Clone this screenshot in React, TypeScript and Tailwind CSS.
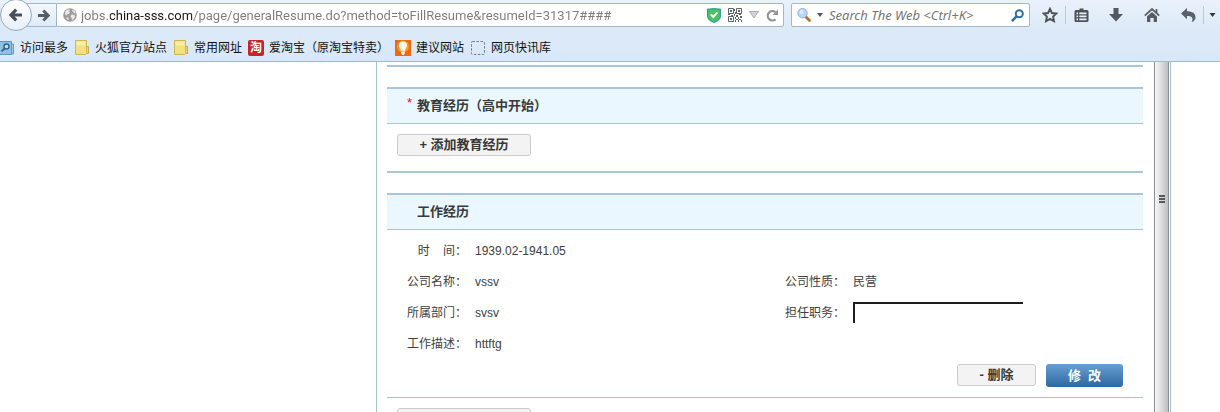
import React from "react";

const URL_TEXT = "jobs.china-sss.com/page/generalResume.do?method=toFillResume&resumeId=31317####";

function ArrowIcon({ className = "" }: { className?: string }) {
  return (
    <svg viewBox="0 0 14 14" className={className} aria-hidden="true">
      <path d="M7.2 1.6 1.9 7l5.3 5.4M2.4 7H13" fill="none" stroke="currentColor" strokeWidth="3.2" />
    </svg>
  );
}

function GlobeIcon() {
  return (
    <svg viewBox="0 0 14 14" className="size-[14px] shrink-0" aria-hidden="true">
      <circle cx="7" cy="7" r="6.8" fill="#9b9b9b" />
      <path d="M2.2 3.2 5 1.2l2 .6L6 3.4l1.2 1L5.6 6 4 6.4l-.4 1.4L2 6.2zM8.6 1.2l3 1.6 1.4 2.6-2-.4-1.4-1.6zM8.4 6.4l3 .4 1 1.4-1.4 2.6-2 1.6-.6-2.8-1.2-1.2zM3.4 9l2 .8.4 2.4L3.6 11z" fill="#e6e6e6" />
    </svg>
  );
}

function ShieldIcon() {
  return (
    <svg viewBox="0 0 14 15" className="h-[15px] w-[14px]" aria-hidden="true">
      <path d="M0 .8 7 0l7 .8V8c0 3.6-4 6-7 7-3-1-7-3.400-7-7z" fill="#2fa48c" />
      <path d="M1.200 2 7 1.300l5.800.7V8c0 2.800-3 4.800-5.800 5.700C4.200 12.800 1.200 10.800 1.200 8z" fill="#4cc163" />
      <path d="m3.800 6.400 2.400 2.600 4.200-4.600" fill="none" stroke="#fff" strokeWidth="1.900" />
    </svg>
  );
}

function QrIcon() {
  return (
    <svg viewBox="0 0 14 14" className="size-[14px]" aria-hidden="true">
      <g fill="none" stroke="#5b6268">
        <path d="M.5.5h5v5h-5zM8.500.5h5v5h-5zM.5 8.500h5v5h-5z" />
      </g>
      <path d="M2 2h2v2H2zM10 2h2v2h-2zM2 10h2v2H2zM6 1h1v2H6zM7 4h1v2H7zM0 6h2v1H0zM3 7h2v1H3zM6 6h1v2H6zM8 7h2v2H8zM11 6h2v1h-2zM12 8h2v2h-2zM7 9h1v2H7zM10 9h1v2h-1zM8 11h2v1H8zM7 12h1v2H7zM11 11h2v1h-2zM10 12h1v2h-1zM13 12h1v2h-1z" fill="#5b6268" />
    </svg>
  );
}

function ReloadIcon() {
  return (
    <svg viewBox="0 0 13 13" className="size-[13px]" aria-hidden="true">
      <path d="M9.600 10.300A4.700 4.700 0 1 1 9.300 3" fill="none" stroke="#8d9399" strokeWidth="2.200" />
      <path d="M12 .4V6H6.500z" fill="#8d9399" />
    </svg>
  );
}

function EngineIcon() {
  return (
    <svg viewBox="0 0 14 14" className="size-[14px]" aria-hidden="true">
      <path d="m8.500 8.500 4 4" stroke="#b5702f" strokeWidth="2.800" strokeLinecap="round" />
      <circle cx="5.500" cy="5.200" r="4.700" fill="#b9d8f5" stroke="#8fb3dd" />
      <circle cx="4.500" cy="4" r="2" fill="#dcedfc" />
    </svg>
  );
}

function SearchIcon() {
  return (
    <svg viewBox="0 0 13 13" className="size-[13px]" aria-hidden="true">
      <circle cx="8.300" cy="4.700" r="3.500" fill="none" stroke="#2f6ea8" strokeWidth="2" />
      <path d="M5.800 7.200.9 12.100" stroke="#2f6ea8" strokeWidth="2.500" />
    </svg>
  );
}

function StarIcon() {
  return (
    <svg viewBox="0 0 16 16" className="size-4" aria-hidden="true">
      <path d="m8 1.800 1.900 4.200 4.500.5-3.300 3.100.9 4.600L8 11.900l-4 2.300.9-4.600L1.600 6.500 6.100 6z" fill="none" stroke="#4b5258" strokeWidth="1.900" />
    </svg>
  );
}

function ClipboardIcon() {
  return (
    <svg viewBox="0 0 15 15" className="size-[15px]" aria-hidden="true">
      <path d="M2 2h3.500V.5h4V2H13q1.500 0 1.500 1.500v9Q14.500 14 13 14H2Q.5 14 .5 12.500v-9Q.5 2 2 2z" fill="#4b5258" />
      <path d="M2.500 4.500H4v1.700H2.500zM5.300 4.500h7.200v1.700H5.300zM2.500 7.500H4v1.700H2.500zM5.300 7.500h7.200v1.700H5.300zM2.500 10.500H4v1.700H2.500zM5.300 10.500h7.200v1.700H5.300z" fill="#e8f1fa" />
    </svg>
  );
}

function DownloadIcon() {
  return (
    <svg viewBox="0 0 14 14" className="size-[14px]" aria-hidden="true">
      <path d="M4.500 0h5v6H14l-7 7.500L0 6h4.500z" fill="#51585e" />
    </svg>
  );
}

function HomeIcon() {
  return (
    <svg viewBox="0 0 16 14" className="h-[14px] w-4" aria-hidden="true">
      <path d="M.8 7.600 8 1l7.200 6.600M12.500 1v4" fill="none" stroke="#555c62" strokeWidth="1.700" />
      <path d="M8 3.900 13 8.500V14H9.700v-4H6.300v4H3V8.500z" fill="#555c62" />
    </svg>
  );
}

function UndoIcon() {
  return (
    <svg viewBox="0 0 15 14" className="h-[14px] w-[15px]" aria-hidden="true">
      <path d="M6 0v3.200c5.500 0 8.500 2.300 8.500 6 0 2-1 3.400-3 4.600-.6.2-1-.2-.6-.7C12.800 9.800 10 7.900 6 8v3.300L0 5.600z" fill="#59616a" />
    </svg>
  );
}

function Caret({ className = "" }: { className?: string }) {
  return (
    <svg viewBox="0 0 6 4" className={className} aria-hidden="true">
      <path d="M0 0h6L3 4z" fill="currentColor" />
    </svg>
  );
}

function MostVisitedIcon() {
  return (
    <svg viewBox="0 0 16 16" className="size-4" aria-hidden="true">
      <path d="M12 4h2.500v10H12z" fill="#a4cdea" stroke="#5e9cc8" />
      <path d="M.5 1.500h12v13H.5z" fill="#8fc1e6" stroke="#5a97c4" />
      <circle cx="7.500" cy="6.500" r="2.500" fill="#c5e2f6" stroke="#2f628f" strokeWidth="1.400" />
      <path d="m5.600 8.400-3 3" stroke="#2f628f" strokeWidth="1.900" />
    </svg>
  );
}

function FolderIcon() {
  return (
    <svg viewBox="0 0 16 16" className="size-4" aria-hidden="true">
      <path d="M11 6.500h3.500v7H11z" fill="#f0d873" stroke="#c9a94a" />
      <path d="M1.500.5h11v13l-1 1h-10z" fill="#f5e07e" stroke="#d0b352" />
      <path d="M2.500 1.500h9v4h-9z" fill="#faeea6" />
    </svg>
  );
}

function TaoIcon() {
  return (
    <span className="flex size-4 items-center justify-center rounded-[2px] bg-[#c9222b] text-[12px] leading-4 font-bold text-white">淘</span>
  );
}

function BulbIcon() {
  return (
    <svg viewBox="0 0 16 16" className="size-4" aria-hidden="true">
      <path d="M0 0h16v16H0z" fill="#ee6a10" />
      <circle cx="8" cy="6.500" r="6" fill="#f99a35" />
      <path d="M8 1.500a4 4 0 0 1 4 4c0 2-1.600 3-2 5.200H6C5.600 8.500 4 7.500 4 5.500a4 4 0 0 1 4-4zM6.300 11.500h3.400v2L8.800 15H7.200l-.9-1.500z" fill="#fff8e8" />
    </svg>
  );
}

function DashedIcon() {
  return (
    <svg viewBox="0 0 16 16" className="size-4" aria-hidden="true">
      <rect x="1.500" y="1.500" width="13" height="13" rx="1" fill="none" stroke="#6d7d90" strokeDasharray="2.500 1.500" />
    </svg>
  );
}

const bookmarks = [
  { label: "访问最多", icon: <MostVisitedIcon /> },
  { label: "火狐官方站点", icon: <FolderIcon /> },
  { label: "常用网址", icon: <FolderIcon /> },
  { label: "爱淘宝（原淘宝特卖）", icon: <TaoIcon /> },
  { label: "建议网站", icon: <BulbIcon /> },
  { label: "网页快讯库", icon: <DashedIcon /> },
];

function ToolButton({ label, children }: { label: string; children: React.ReactNode }) {
  return (
    <button type="button" aria-label={label} className="flex h-6 w-[30px] items-center justify-center">
      {children}
    </button>
  );
}

function BrowserChrome() {
  return (
    <header className="shrink-0 border-b border-[#a0b8d6] bg-linear-to-b from-[#e9f2fb] via-[#dce9f7] to-[#d9e8f8]">
      <div className="flex h-[30px] items-center">
        <button type="button" aria-label="后退" className="z-10 flex size-8 shrink-0 items-center justify-center rounded-full border border-[#97a9bf] bg-linear-to-b from-white to-[#e6eff9] text-[#474e55]">
          <ArrowIcon className="size-[14px]" />
        </button>
        <button type="button" aria-label="前进" className="-ml-2 flex h-6 w-8 shrink-0 items-center justify-end border-y border-[#a3b6cf] bg-linear-to-b from-[#f3f8fd] to-[#dfeaf6] pr-[6px] text-[#565d64]">
          <ArrowIcon className="size-[13px] rotate-180" />
        </button>
        <div className="flex h-6 min-w-0 flex-1 items-center rounded-r-[2px] border border-[#a3b6cf] bg-white pl-[6px]">
          <GlobeIcon />
          <input
            aria-label="地址"
            defaultValue={URL_TEXT}
            className="ml-1 h-[22px] min-w-0 flex-1 bg-linear-[90deg,#7d7d7d_29px,#161616_29px,#161616_111px,#7d7d7d_111px] bg-clip-text font-[Roboto,sans-serif] text-[13px] leading-5 text-transparent outline-none"
          />
          <div className="flex items-center gap-[7px] pr-1">
            <ShieldIcon />
            <QrIcon />
            <button type="button" aria-label="历史记录">
              <svg viewBox="0 0 10 8" className="h-2 w-[10px]" aria-hidden="true">
                <path d="M.5.500h9L5 7z" fill="#d0d4d8" stroke="#a7adb3" />
              </svg>
            </button>
            <button type="button" aria-label="重新载入">
              <ReloadIcon />
            </button>
          </div>
        </div>
        <form className="ml-[7px] flex h-6 w-[239px] shrink-0 items-center rounded-[2px] border border-[#a3b6cf] bg-white px-[5px]" onSubmit={(e) => e.preventDefault()}>
          <button type="button" aria-label="选择搜索引擎" className="flex items-center gap-[6px] text-[#555]">
            <EngineIcon />
            <Caret className="h-1 w-[6px]" />
          </button>
          <input
            aria-label="搜索"
            placeholder="Search The Web <Ctrl+K>"
            className="ml-[6px] h-[22px] min-w-0 flex-1 font-['Noto_Sans',sans-serif] text-[13px] leading-5 outline-none placeholder:text-[#767676] placeholder:italic"
          />
          <button type="submit" aria-label="开始搜索">
            <SearchIcon />
          </button>
        </form>
        <div className="ml-[5px] flex shrink-0 items-center">
          <ToolButton label="加入书签"><StarIcon /></ToolButton>
          <span className="h-[18px] w-px bg-[#b9c8da]" />
          <ToolButton label="书签列表"><ClipboardIcon /></ToolButton>
          <span className="w-[5px]" />
          <ToolButton label="下载"><DownloadIcon /></ToolButton>
          <span className="w-[6px]" />
          <ToolButton label="主页"><HomeIcon /></ToolButton>
          <span className="w-[6px]" />
          <ToolButton label="撤销"><UndoIcon /></ToolButton>
          <span className="h-[18px] w-px bg-[#b9c8da]" />
          <button type="button" aria-label="更多" className="flex h-6 w-4 items-center justify-center text-[#30363c]">
            <Caret className="h-1 w-[7px]" />
          </button>
        </div>
      </div>
      <nav className="mt-[5px] -ml-px flex h-[26px] items-center gap-[6px]">
        {bookmarks.map((b) => (
          <a key={b.label} href="#" className="flex items-center gap-[5px] text-[12px] leading-4 whitespace-nowrap text-[#111]">
            {b.icon}
            {b.label}
          </a>
        ))}
      </nav>
    </header>
  );
}

function SectionTitle({ required = false, children }: { required?: boolean; children: React.ReactNode }) {
  return (
    <h2 className="mt-5 flex h-[37px] items-center border-t-2 border-b border-t-[#a9c5d9] border-b-[#a9c5d9] bg-[#ebf7ff] pl-5 text-[13px] leading-5 font-bold text-[#3a3a3a]">
      <span className="w-[10px] self-start pt-1 font-['Liberation_Sans',sans-serif] font-normal text-[#e0131c]">{required ? "*" : ""}</span>
      {children}
    </h2>
  );
}

function GrayButton({ wide = false, label, children }: { wide?: boolean; label?: string; children?: React.ReactNode }) {
  return (
    <button
      type="button"
      aria-label={label}
      className={`${wide ? "w-[134px]" : "w-[79px]"} flex h-[22px] items-center justify-center rounded-[3px] border border-[#cbcbcb] bg-[#f3f3f3] text-[13px] leading-5 font-bold text-[#383838]`}
    >
      {children}
    </button>
  );
}

function Field({ label, wide = false, children }: { label: string; wide?: boolean; children: React.ReactNode }) {
  return (
    <div className={`${wide ? "col-span-2" : ""} flex h-[31px] items-center gap-2`}>
      <dt className="w-20 shrink-0 text-right whitespace-pre">{label}</dt>
      <dd>{children}</dd>
    </div>
  );
}

export default function App() {
  return (
    <div className="flex h-screen flex-col overflow-hidden bg-white font-['Liberation_Sans','Noto_Sans_CJK_SC',sans-serif]">
      <BrowserChrome />
      <div className="flex min-h-0 flex-1">
        <div className="mr-[49px] ml-[376px] flex min-w-0 flex-1 border-x border-[#a9c0da]">
          <main className="min-w-0 flex-1 overflow-hidden pt-[3px] pr-[11px] pl-[10px] text-[12px] leading-5 text-[#404040]">
            <section className="border-t-2 border-[#a9c5d9]">
              <SectionTitle required>教育经历（高中开始）</SectionTitle>
              <div className="border-b-2 border-[#a9c5d9] px-[10px] pt-[10px] pb-[15px]">
                <GrayButton wide>+ 添加教育经历</GrayButton>
              </div>
            </section>
            <section>
              <SectionTitle>工作经历</SectionTitle>
              <dl className="grid grid-cols-2 pt-[5px]">
                <Field label={"时    间："} wide>1939.02-1941.05</Field>
                <Field label="公司名称：">vssv</Field>
                <Field label="公司性质：">民营</Field>
                <Field label="所属部门：">svsv</Field>
                <Field label="担任职务：">
                  <input aria-label="担任职务" className="block h-[21px] w-[170px] border-t-2 border-l-2 border-[#1d1d20] px-1 outline-none" />
                </Field>
                <Field label="工作描述：" wide>httftg</Field>
              </dl>
              <div className="flex justify-end gap-[10px] border-b border-[#a9c5d9] pt-[5px] pr-5 pb-[10px]">
                <GrayButton>- 删除</GrayButton>
                <button type="button" className="h-[23px] w-[77px] rounded-[3px] bg-linear-to-b from-[#68a0d4] to-[#2d68a0] text-[13px] leading-5 font-bold whitespace-pre text-white">
                  {"修  改"}
                </button>
              </div>
              <div className="px-[10px] pt-[10px]">
                <GrayButton wide label="添加工作经历" />
              </div>
            </section>
          </main>
          <div role="scrollbar" aria-controls="root" aria-valuenow={50} className="mr-px flex w-[15px] shrink-0 items-center justify-center border-x border-[#8b8e93] bg-linear-to-r from-[#f5f5f5] via-[#dcdcde] to-[#bdbdc3] pb-[76px]">
            <span className="flex flex-col gap-px">
              <span className="h-[2px] w-[6px] bg-[#55585c]" />
              <span className="h-[2px] w-[6px] bg-[#55585c]" />
              <span className="h-[2px] w-[6px] bg-[#55585c]" />
            </span>
          </div>
        </div>
      </div>
    </div>
  );
}
